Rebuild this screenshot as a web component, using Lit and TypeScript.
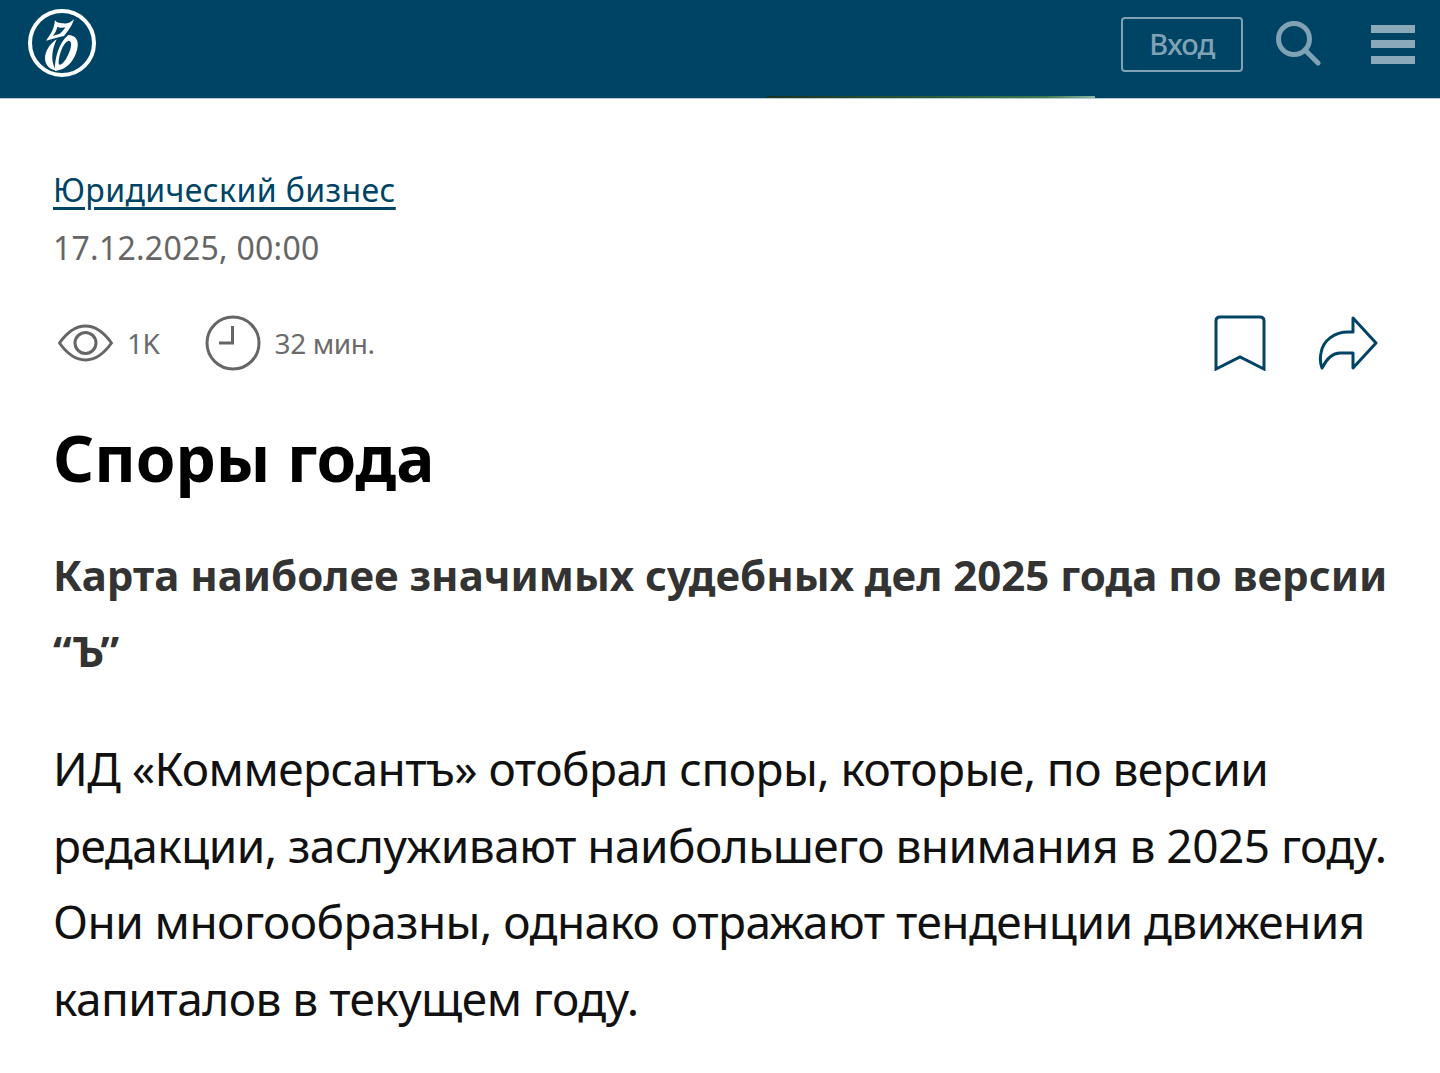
import { LitElement, html, css } from "lit";
import { customElement } from "lit/decorators.js";

@customElement("app-root")
export class AppRoot extends LitElement {
  static styles = css`
    :host {
      display: block;
      font-family: "Noto Sans", sans-serif;
      background: #fff;
      min-height: 1073px;
      overflow: hidden;
    }
    .header {
      height: 98px;
      background: #004465;
      display: flex;
      align-items: center;
      padding: 0 25px 10px 27px;
      box-sizing: border-box;
      position: relative;
      box-shadow: 0 1px 0 #b5ccd8;
    }
    .header::after {
      content: "";
      position: absolute;
      left: 767px;
      width: 328px;
      bottom: 0;
      height: 2px;
      background: linear-gradient(90deg, #1c3323, #2c5a34 50%, #3f7a4c 85%, #8fb5a5);
    }
    .logo {
      width: 70px;
      height: 70px;
      display: block;
    }
    .spacer {
      flex: 1;
    }
    .login {
      width: 122px;
      height: 55px;
      box-sizing: border-box;
      border: 2px solid #7fa3b5;
      border-radius: 4px;
      color: #7fa3b5;
      font-size: 29px;
      font-weight: 500;
      letter-spacing: -0.8px;
      padding-bottom: 2px;
      display: flex;
      align-items: center;
      justify-content: center;
      margin-right: 32px;
    }
    .search {
      width: 46px;
      height: 46px;
      display: block;
      margin-right: 50px;
    }
    .burger {
      width: 44px;
      display: flex;
      flex-direction: column;
      gap: 7.5px;
    }
    .burger span {
      height: 8px;
      background: #8aaaba;
    }
    .content {
      padding: 66px 40px 0 53px;
    }
    .rubric {
      display: block;
      font-size: 32px;
      line-height: 52px;
      letter-spacing: 0.4px;
      color: #004465;
      text-decoration: underline;
      text-decoration-thickness: 3px;
      text-underline-offset: 5px;
    }
    .date {
      font-size: 32px;
      line-height: 62px;
      letter-spacing: 0.25px;
      margin-top: 1px;
      color: #666;
    }
    .meta {
      display: flex;
      align-items: center;
      margin-top: 32px;
      height: 64px;
    }
    .stat {
      display: flex;
      align-items: center;
      font-size: 28px;
      letter-spacing: -0.4px;
      color: #6b6b6b;
    }
    .stat svg {
      display: block;
    }
    .views {
      margin-left: 5px;
      margin-right: 45px;
    }
    .views svg {
      margin-right: 14px;
    }
    .time svg {
      margin-right: 14px;
    }
    .actions {
      margin-left: auto;
      display: flex;
      align-items: center;
      gap: 52px;
      margin-right: 22px;
    }
    .actions svg {
      display: block;
    }
    h1 {
      margin: 40px 0 0;
      font-size: 64px;
      line-height: 86px;
      font-weight: 700;
      letter-spacing: -0.1px;
      color: #000;
    }
    .lead {
      margin: 36px 0 0;
      font-size: 42px;
      line-height: 76px;
      font-weight: 700;
      color: #333;
    }
    .body {
      margin: 41px 0 0;
      font-size: 46px;
      line-height: 76.5px;
      letter-spacing: -0.54px;
      color: #111;
    }
  `;

  render() {
    return html`
      <header class="header">
        <svg class="logo" viewBox="81 27 210 210">
          <circle cx="186" cy="129" r="96" fill="none" stroke="#fff" stroke-width="12" />
          <path
            fill="#fff"
            fill-rule="evenodd"
            d="M165 60 C170 70 178 68 190 70 C200 72 212 68 222 58 C215 80 205 92 192 108 C175 112 155 118 138 122 C150 105 162 90 165 60 Z M172 80 C178 84 188 84 196 82 C190 92 184 98 178 102 C170 104 163 106 158 108 C165 100 170 90 172 80 Z"
          />
          <path
            fill="#fff"
            d="M170 118 C150 130 135 155 135 175 C135 195 150 210 170 212 C155 195 150 160 170 118 Z"
          />
          <path
            fill="#fff"
            fill-rule="evenodd"
            d="M205 105 C225 105 238 120 232 145 C225 180 200 212 165 212 C163 175 178 125 205 105 Z M206 122 C190 126 176 165 176 190 C178 202 194 188 204 165 C214 145 218 124 206 122 Z"
          />
        </svg>
        <div class="spacer"></div>
        <div class="login">Вход</div>
        <svg class="search" viewBox="0 0 46 46" fill="none" stroke="#7fa3b5">
          <circle cx="19" cy="18" r="15.5" stroke-width="5" />
          <path d="M30 29 L43 42" stroke-width="5" stroke-linecap="round" />
        </svg>
        <div class="burger"><span></span><span></span><span></span></div>
      </header>
      <main class="content">
        <a class="rubric">Юридический бизнес</a>
        <div class="date">17.12.2025, 00:00</div>
        <div class="meta">
          <div class="stat views">
            <svg width="55" height="40" viewBox="0 0 55 40" fill="none" stroke="#666" stroke-width="3">
              <path d="M1.5 20 C10 8 18 3 27.5 3 C37 3 45 8 53.5 20 C45 32 37 37 27.5 37 C18 37 10 32 1.5 20 Z" />
              <circle cx="27.5" cy="20" r="10.5" />
            </svg>
            1K
          </div>
          <div class="stat time">
            <svg width="56" height="56" viewBox="0 0 56 56" fill="none" stroke="#666" stroke-width="3">
              <circle cx="28" cy="28" r="26" />
              <path d="M27.5 11 V28 H14" />
            </svg>
            32 мин.
          </div>
          <div class="actions">
            <svg width="52" height="56" viewBox="0 0 52 56" fill="none" stroke="#004465" stroke-width="3">
              <path d="M2 54 V6 Q2 2 6 2 H46 Q50 2 50 6 V54 L26 42 Z" />
            </svg>
            <svg width="60" height="54" viewBox="0 0 60 54" fill="none" stroke="#004465" stroke-width="3" stroke-linejoin="round">
              <path d="M4 52 C2 47 2 42 3 37 C5 24 17 16 30 16 H35 V2 L58 27 L35 52 V37 H22 C13 37 8 44 4 52 Z" />
            </svg>
          </div>
        </div>
        <h1>Споры года</h1>
        <p class="lead">Карта наиболее значимых судебных дел 2025 года по версии “Ъ”</p>
        <p class="body">ИД «Коммерсантъ» отобрал споры, которые, по версии редакции, заслуживают наибольшего внимания в 2025 году. Они многообразны, однако отражают тенденции движения капиталов в текущем году.</p>
      </main>
    `;
  }
}
